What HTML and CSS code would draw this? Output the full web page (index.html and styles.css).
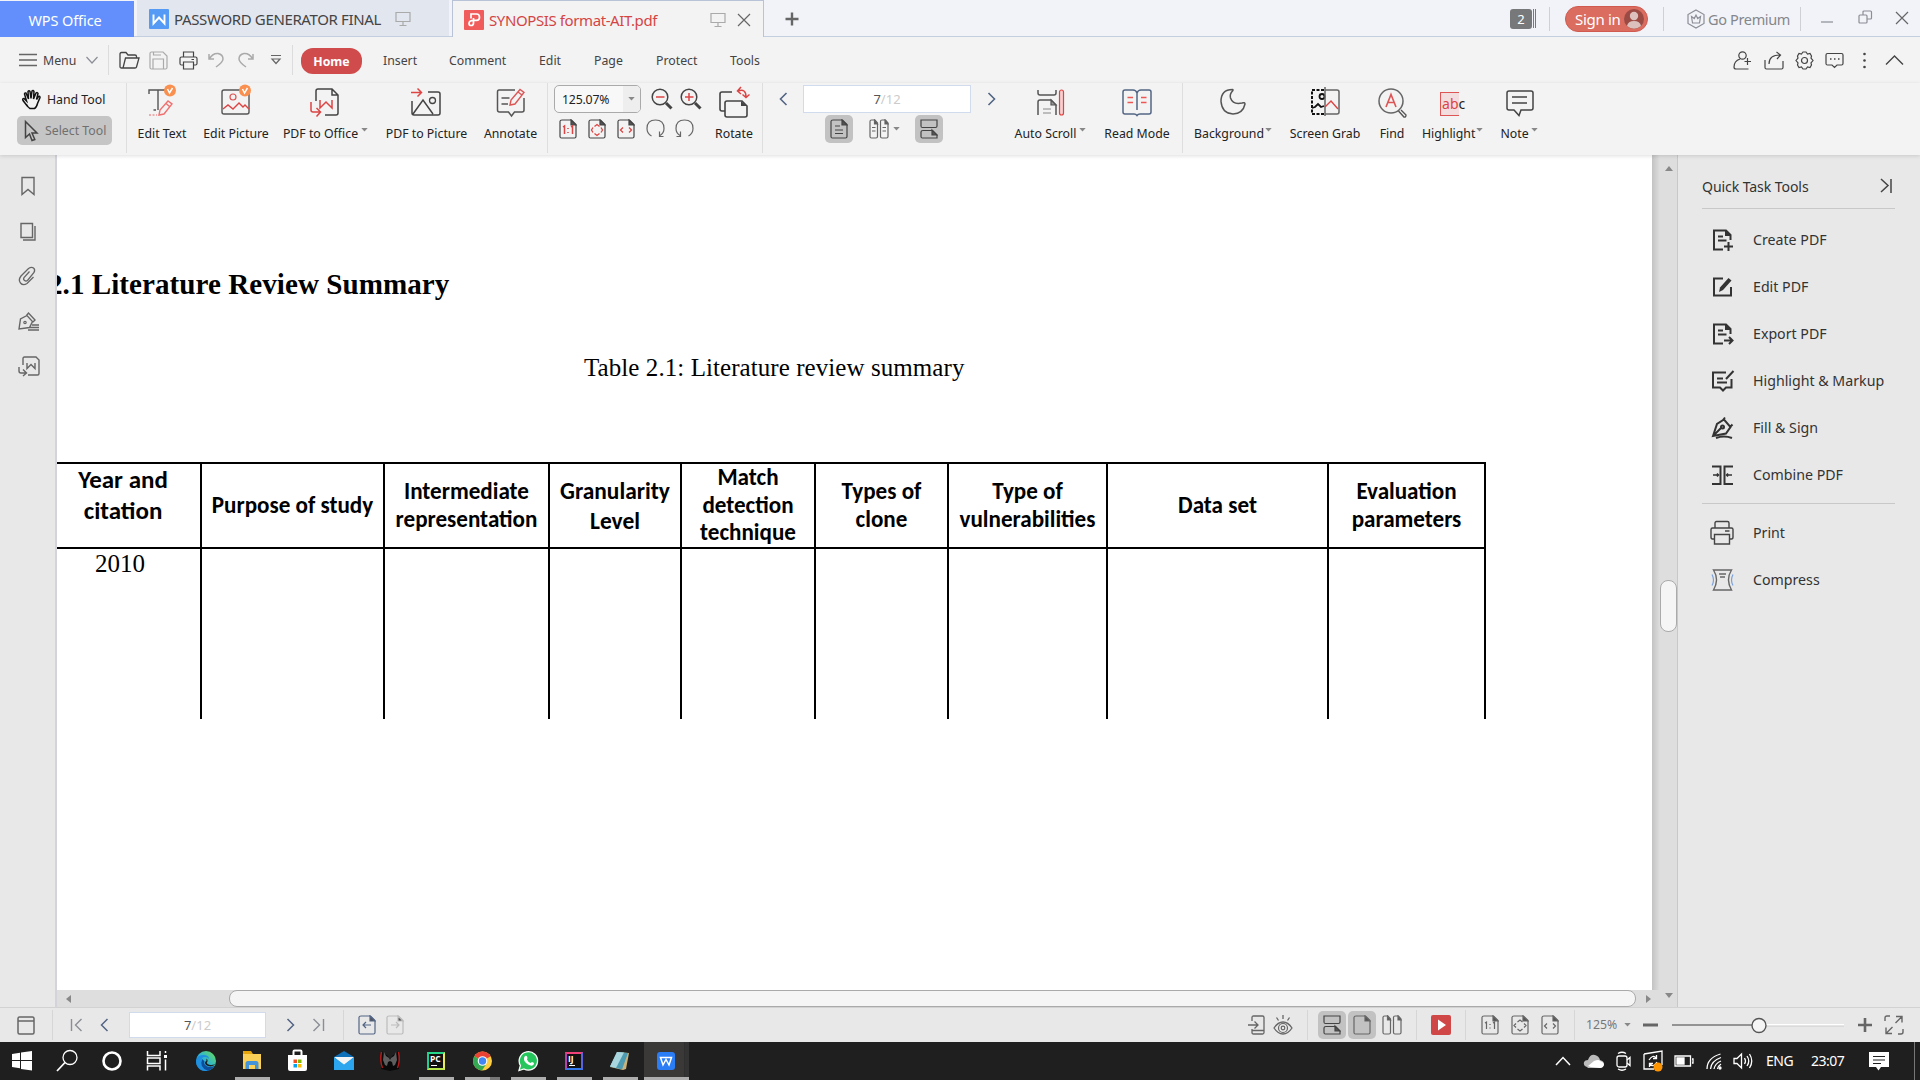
FILE: index.html
```html
<!DOCTYPE html>
<html lang="en">
<head>
<meta charset="utf-8">
<title>SYNOPSIS format-AIT.pdf - WPS Office</title>
<link rel="stylesheet" href="styles.css">
</head>
<body>
<svg class="defs" width="0" height="0">
  <symbol id="monitor" viewBox="0 0 16 16"><path d="M1 1.500h14v9H1zM8 10.500V14M4.500 14.500h7"/></symbol>
  <symbol id="page" viewBox="0 0 18 20"><path d="M3 1h9.500L17 5.500V17.500Q17 19 15.500 19H2.500Q1 19 1 17.500V2.500Q1 1 3 1z"/><path class="fold" d="M12 1v5h5z"/></symbol>
  <symbol id="pages2" viewBox="0 0 20 20"><path d="M1 2.500Q1 1 2.500 1H6l2.500 3v13.500Q8.500 19 7 19H2.500Q1 19 1 17.500zM11.500 2.500Q11.500 1 13 1h3.500L19 4v13.500Q19 19 17.500 19H13q-1.500 0-1.500-1.500z"/><path class="fold" d="M5.500 1v4h3zM16 1v4h3z"/></symbol>
  <symbol id="scrollpages" viewBox="0 0 18 20"><path d="M1 1h16v6Q17 8.500 15.500 8.500h-13Q1 8.500 1 7zM3 11.500h9.500L17 16v3H2.500Q1 19 1 17.500V13q0-1.500 2-1.500z"/><path class="fold" d="M12 11v5h5z"/></symbol>
  <symbol id="caret" viewBox="0 0 8 5"><path class="caret-fill" d="M0 0h8L4 4.500z"/></symbol>
</svg>

<header class="titlebar">
  <div class="tab-home">WPS Office</div>
  <div class="tab tab-doc">
    <svg class="ic" width="20" height="20"><rect width="20" height="20" rx="1" fill="#559bf6"/><path d="M4.500 5.500v9l5.500-6 5.500 6v-9" stroke="#fff" stroke-width="1.900"/></svg>
    <span class="tab-title">PASSWORD GENERATOR FINAL</span>
    <svg class="ic light" width="16" height="16"><use href="#monitor"/></svg>
  </div>
  <div class="tab tab-active">
    <svg class="ic" width="20" height="20"><rect width="20" height="20" rx="1" fill="#f05b5b"/><path d="M7 8.500V4h5.500q3 0 3 3.200t-3 3.200H10q-5 0-5 3 0 2.100 2.200 2.100 2.300 0 2.300-2.500V8" stroke="#fff" stroke-width="1.700"/></svg>
    <span class="tab-title">SYNOPSIS format-AIT.pdf</span>
    <svg class="ic light" width="16" height="16"><use href="#monitor"/></svg>
    <svg class="ic gray" width="14" height="14"><path d="M1 1l12 12M13 1L1 13"/></svg>
  </div>
  <svg class="ic gray" width="16" height="16"><path d="M8 1.500v13M1.500 8h13" stroke-width="2.400"/></svg>
  <div class="count"><b>2</b><i></i><i></i></div>
  <span class="sep-title"></span>
  <div class="signin">Sign in<svg class="ic" width="20" height="20"><circle cx="10" cy="10" r="10" fill="#9b4b44"/><circle cx="10" cy="7" r="4.200" fill="#dcc0bd"/><path d="M3 17q1-5 7-5t7 5q-7 5.500-14 0z" fill="#dcc0bd"/></svg></div>
  <span class="sep-title"></span>
  <div class="premium"><svg class="ic gray2" width="18" height="20"><path d="M9 1l8 4.500v9L9 19l-8-4.500v-9zM4.500 7.500l1 6.500h7l1-6.500-2.800 2L9 6 7.300 9.500z"/></svg>Go Premium</div>
  <span class="sep-title"></span>
  <svg class="ic gray2" width="12" height="20"><path d="M0 13h12"/></svg>
  <svg class="ic gray2 up" width="15" height="15"><path d="M1 6q0-1 1-1h6q1 0 1 1v6q0 1-1 1H2q-1 0-1-1zM5 5V2q0-1 1-1h6.500q1 0 1 1v6q0 1-1 1H9"/></svg>
  <svg class="ic gray up" width="14" height="14"><path d="M1 1l12 12M13 1L1 13"/></svg>
</header>

<nav class="menubar">
  <svg class="ic gray" width="18" height="14"><path d="M0 1.500h18M0 7h18M0 12.500h18" stroke-width="1.400"/></svg>
  <span>Menu</span>
  <svg class="ic gray2" width="12" height="8"><path d="M.500 1L6 7l5.500-6"/></svg>
  <i class="sep-menu"></i>
  <svg class="ic dark" width="21" height="20"><path d="M4 18H2.500Q1 18 1 16.500V4q0-1.500 1.500-1.500H7l2 2.500h7q1.500 0 1.500 1.500V8M4 18L6.500 8H20l-2.500 9q-.300 1-1.500 1z" stroke-width="1.300"/></svg>
  <svg class="ic light" width="19" height="19"><path d="M1 2.500Q1 1 2.500 1H14l4 4v11.500q0 1.500-1.500 1.500h-14Q1 18 1 16.500zM4.500 1v3H12M4 18V8h10.500v10"/></svg>
  <svg class="ic dark" width="19" height="19"><path d="M4.500 6V1h10v5M4 14H2.500Q1 14 1 12.500V7.500Q1 6 2.500 6h14Q18 6 18 7.500v5q0 1.500-1.500 1.500H15M4.500 11h10v7h-10zM12.500 8.500h2.500"/></svg>
  <svg class="ic light" width="16" height="16"><path d="M1 2v5h5M1.500 6.500Q5 1 10 1.500q5 1 5 5.500 0 3-7 8" stroke-width="1.500"/></svg>
  <svg class="ic light" width="16" height="16"><path d="M15 2v5h-5M14.500 6.500Q11 1 6 1.500 1 2.500 1 7q0 3 7 8" stroke-width="1.500"/></svg>
  <svg class="ic gray" width="10" height="12"><path d="M0 1.500h10M1 5h8L5 9.500z"/></svg>
  <i class="sep-menu"></i>
  <b class="home-tab">Home</b>
  <span>Insert</span><span>Comment</span><span>Edit</span><span>Page</span><span>Protect</span><span>Tools</span>
  <svg class="ic dark" width="19" height="19"><circle cx="9.500" cy="4.500" r="3.700"/><path d="M7 8q-6 2-6 8 0 2 2 2h12.500M14.500 7v7M11.500 10.500h6.500"/></svg>
  <svg class="ic dark" width="20" height="19"><path d="M1 9v7.500Q1 18 2.500 18h15q1.500 0 1.500-1.500V10M5 13q0-9 11-9M12.500 1l4 3-3.500 4"/></svg>
  <svg class="ic dark" width="19" height="19"><circle cx="9.500" cy="9.500" r="3"/><path d="M6.500 3L8 1h3l1.500 2 2.500-.500L16.500 5 16 7l2 2.500L16 12l.500 2-1.500 2.500-2.500-.500L11 18H8l-1.500-2L4 16.500 2.500 14 3 12 1 9.500 3 7l-.500-2L4 2.500z"/></svg>
  <svg class="ic dark" width="19" height="17"><path d="M2.500 1.500h14q1.500 0 1.500 1.500v8.500q0 1.500-1.500 1.500H12l-2.500 2.500L7 13H2.500Q1 13 1 11.500V3q0-1.500 1.500-1.500z"/><path d="M5 7h1.500M9 7h1.500M13 7h1.500" stroke-width="1.700"/></svg>
  <svg class="ic" width="4" height="18"><g fill="#444"><circle cx="1.500" cy="3" r="1.300"/><circle cx="1.500" cy="9.500" r="1.300"/><circle cx="1.500" cy="16" r="1.300"/></g></svg>
  <svg class="ic dark" width="19" height="12"><path d="M1 10.500L9.500 2l8.500 8.500" stroke-width="1.400"/></svg>
</nav>

<section class="ribbon">
  <div class="tools">
    <div class="tool"><svg class="ic black" width="22" height="22"><path d="M5.500 16L2 11.500q-1-2 1-2l2.500 2.500L3.500 5Q3.500 3.500 5 4l2.500 6L7 2.500Q8 1 9 2.500l1 7 1-7.500q1.200-1.200 2 .500l-.500 7.500 2.500-6q1.500-1 2 .500l-1.500 6 2-3q1.500-.800 1.500 1l-2.500 6q-1 4-3 5H9q-2-1-3.500-4z" stroke-width="1.500"/></svg>Hand Tool</div>
    <div class="tool selected"><svg class="ic dark" width="16" height="22"><path d="M2.500 1.500v16l4-3.500 2.500 6.500 2.800-1-2.800-6.500h5z" stroke-width="1.500"/></svg>Select Tool</div>
  </div>
  <i class="sep-ribbon"></i>
  <div class="cmd edit-text"><svg class="ic" width="32" height="34"><path d="M4 10V6h18v4M13 6v20M8.500 26H11" stroke="#555" stroke-width="1.400"/><path d="M14 31l1-5 8-9 4 3-8 10zM20.500 19l4 3.500" stroke="#f07070" stroke-width="1.400"/><path d="M4 31h8" stroke="#e66" stroke-dasharray="2 1.500"/><circle cx="25" cy="6.500" r="6" fill="#f9904f"/><path d="M22.500 5l2 4 3-5" stroke="#fff" stroke-width="1.500"/></svg><span>Edit Text</span></div>
  <div class="cmd edit-pic"><svg class="ic" width="32" height="34"><rect x="3" y="6" width="27" height="24" rx="2" stroke="#555" stroke-width="1.400"/><circle cx="14" cy="13" r="3" stroke="#d55"/><path d="M4 25l5-4 5 4 6-6 4 4 2-2 4 4" stroke="#d44" stroke-width="1.400"/><circle cx="26" cy="6.500" r="6" fill="#f9904f"/><path d="M23.500 5l2 4 3-5" stroke="#fff" stroke-width="1.500"/></svg><span>Edit Picture</span></div>
  <div class="cmd drop to-office"><svg class="ic" width="32" height="34"><path d="M8 17V7q0-2 2-2h14l6 6v18q0 2-2 2H17M24 5v6h6" stroke="#444" stroke-width="1.500"/><path d="M12 16v8l6-6 6 6v-8" stroke="#d44" stroke-width="1.500"/><path d="M3 18v8q0 2 2 2h7M8.500 24l4 4-4 4.500" stroke="#d44" stroke-width="1.500"/></svg><span>PDF to Office</span><svg class="ic mark" width="7" height="4"><use href="#caret"/></svg></div>
  <div class="cmd to-pic"><svg class="ic" width="32" height="34"><path d="M18 8h10q2 0 2 2v19q0 2-2 2H4q-2 0-2-2V17M3 30l10-14 10 14" stroke="#444" stroke-width="1.500"/><circle cx="22.500" cy="16.500" r="3" stroke="#444" stroke-width="1.300"/><path d="M1 8.500h10M7.500 4.500l4 4-4 4" stroke="#d44" stroke-width="1.500"/></svg><span>PDF to Picture</span></div>
  <div class="cmd annotate"><svg class="ic" width="32" height="34"><path d="M20 6H4Q2.500 6 2.500 8v18q0 2 2 2h9l3 4 3-4H27q2 0 2-2V14M6.500 14h8M6.500 20H13" stroke="#555" stroke-width="1.500"/><path d="M15 21l1-5L25 5.500l4 3L20 20zM23 8l4 3" stroke="#d55" stroke-width="1.400"/></svg><span>Annotate</span></div>
  <i class="sep-ribbon"></i>
  <div class="zoombox">
    <div class="row-top">
      <div class="combo"><span>125.07%</span><i><svg class="ic" width="7" height="4"><use href="#caret"/></svg></i></div>
      <svg class="ic dark" width="22" height="22"><circle cx="9" cy="9" r="7.800" stroke-width="1.500"/><path d="M15 15l5.500 5.500" stroke-width="3"/><path d="M5 9h8.500" stroke="#d44" stroke-width="1.500"/></svg>
      <svg class="ic dark" width="22" height="22"><circle cx="9" cy="9" r="7.800" stroke-width="1.500"/><path d="M15 15l5.500 5.500" stroke-width="3"/><path d="M5 9h8.500M9 5v8" stroke="#d44" stroke-width="1.500"/></svg>
    </div>
    <div class="row-bottom">
      <svg class="ic dark" width="18" height="20"><use href="#page"/><path d="M4 8l1.500-1v8M12 8l1.500-1v8M9 9v1M9 13v1" stroke="#d44" stroke-width="1.500"/></svg>
      <svg class="ic dark" width="18" height="20"><use href="#page"/><path d="M6.500 7.500l2.500-2 2.500 2M6.500 14.500l2.500 2 2.500-2M5 8.500L3.500 11 5 13.500M13 8.500l1.500 2.500-1.500 2.500" stroke="#d44" stroke-width="1.300"/></svg>
      <svg class="ic dark" width="18" height="20"><use href="#page"/><path d="M6 8.500L3.500 11 6 13.500M12 8.500l2.500 2.500-2.500 2.500" stroke="#d44" stroke-width="1.300"/></svg>
      <svg class="ic gray" width="19" height="20"><path d="M5.500 17Q1 14.500 1 9.500 1 1 9.500 1T18 9.500q0 4.500-4 7M13.500 12.500v5h4"/></svg>
      <svg class="ic gray" width="19" height="20"><path d="M13.500 17q4.500-2.500 4.500-7.500Q18 1 9.500 1T1 9.500q0 4.500 4 7M5.500 12.500v5h-4"/></svg>
    </div>
  </div>
  <div class="cmd rotate"><svg class="ic" width="32" height="34"><path d="M7 27H4q-2 0-2-2V10q0-2 2-2h10M7 30V19q0-2 2-2h15l5 5v9q0 2-2 2H9q-2 0-2-2z" stroke="#444" stroke-width="1.600"/><path d="M14 8v5M23 17v5h6z" fill="#444"/><path d="M20 7q8-3 8 6M23 3l-3.500 4L23 10M24.500 10.500l3.500 3 3.500-3" stroke="#d44" stroke-width="1.500"/></svg><span>Rotate</span></div>
  <i class="sep-ribbon"></i>
  <div class="pagebox">
    <div class="row-top">
      <svg class="ic blue" width="9" height="14"><path d="M7.500 1L1.500 7l6 6" stroke-width="1.600"/></svg>
      <div class="pageno">7<span>/12</span></div>
      <svg class="ic blue" width="9" height="14"><path d="M1.500 1l6 6-6 6" stroke-width="1.600"/></svg>
    </div>
    <div class="row-bottom">
      <div class="toggle"><svg class="ic dark" width="18" height="20"><use href="#page"/><path d="M5 7h5M5 11h8M5 14.500h8"/></svg></div>
      <svg class="ic gray" width="20" height="20"><use href="#pages2"/><path d="M3 8.500h3.500M3 12h3.500M13.500 8.500H17M13.500 12H17"/></svg>
      <svg class="ic" width="7" height="4"><use href="#caret"/></svg>
      <div class="toggle"><svg class="ic dark" width="18" height="20"><use href="#scrollpages"/></svg></div>
    </div>
  </div>
  <div class="cmd drop scroll"><svg class="ic" width="32" height="34"><path d="M3 6v3q0 2 2 2h14q2 0 2-2V6M3 31V18q0-2 2-2h11l5 5v10" stroke="#555" stroke-width="1.500"/><path d="M16 16v5h5z" fill="#999" stroke="#555"/><path d="M8 25h8M8 29h8" stroke="#888"/><rect x="24.500" y="6" width="4" height="25" rx="2" stroke="#d44" fill="#f5d0d0"/></svg><span>Auto Scroll</span><svg class="ic mark" width="7" height="4"><use href="#caret"/></svg></div>
  <div class="cmd read"><svg class="ic" width="32" height="34"><path d="M16 9v17M16 9q-1-3-4-3H4Q2 6 2 8v20q0 2 2 2h9q2 0 3 1.500Q17 30 19 30h9q2 0 2-2V8q0-2-2-2h-8q-3 0-4 3z" stroke="#536585" stroke-width="1.500"/><path d="M6.500 13.500H12M6.500 18.500H12M20 13.500h5.500M20 18.500h5.500" stroke="#e55" stroke-width="1.500"/></svg><span>Read Mode</span></div>
  <i class="sep-ribbon"></i>
  <div class="cmd drop backdrop"><svg class="ic" width="32" height="34"><path d="M15.500 5.500Q4 5.500 4 17.500 5 29.500 16 30q10-.500 12-10 0-2-3-1-9 2-11.500-5Q12.500 10 15.500 7q1-1.500 0-1.500z" stroke="#555" stroke-width="1.500"/></svg><span>Background</span><svg class="ic mark" width="7" height="4"><use href="#caret"/></svg></div>
  <div class="cmd grab"><svg class="ic" width="32" height="34"><path d="M15 6H3v24h12" stroke="#111" stroke-width="2" stroke-dasharray="3 1.500"/><circle cx="13" cy="12.500" r="2.500" stroke="#111" stroke-width="1.800"/><path d="M3 24l3-1 3-3 3 3 3-1" stroke="#111" stroke-width="1.800"/><path d="M16 3v29M16 6h12q2 0 2 2v20q0 2-2 2H16" stroke="#666" stroke-width="1.500"/><path d="M16 23l6-6 7 8" stroke="#d44" stroke-width="1.400"/></svg><span>Screen Grab</span></div>
  <div class="cmd find"><svg class="ic" width="32" height="34"><circle cx="15" cy="17" r="12" stroke="#666" stroke-width="1.500"/><path d="M22.500 27l5.500 6q2 .500 2-2l-5-5" stroke="#555" stroke-width="1.400"/><path d="M10 23l5-12.500L20 23M12 18.500h6" stroke="#d55" stroke-width="1.600"/></svg><span>Find</span></div>
  <div class="cmd drop hilite"><div class="abc"><em>ab</em>c</div><span>Highlight</span><svg class="ic mark" width="7" height="4"><use href="#caret"/></svg></div>
  <div class="cmd drop note"><svg class="ic" width="32" height="34"><path d="M5 7h22q2 0 2 2v15q0 2-2 2H17l-2 5.500L10 26H5q-2 0-2-2V9q0-2 2-2zM8 13h15M8 19h15" stroke="#444" stroke-width="1.500"/></svg><span>Note</span><svg class="ic mark" width="7" height="4"><use href="#caret"/></svg></div>
</section>

<main class="workspace">
  <aside class="rail">
    <svg class="ic gray" width="20" height="20"><path d="M4 1.500h12v17l-6-5-6 5z" stroke-width="1.400"/></svg>
    <svg class="ic gray" width="20" height="20"><path d="M3 2.500h11.500v14H3zM17 5v14H5" stroke-width="1.400"/></svg>
    <svg class="ic gray" width="20" height="20"><path d="M11.500 5.500L6 11.500q-1 2 .500 3t3 0l6.500-8q1.500-3-.500-4.500t-5 .500L3 10q-3 4-.500 7t6.500.500L15.500 11" stroke-width="1.300"/></svg>
    <svg class="ic gray" width="22" height="20"><path d="M1 18L2.500 8 9 4.500l5.500 6-3 6zM8.500 4.500L10.500 2l6.500 7-2 2M14 14h7M12 16.500h9M10 19h11" stroke-width="1.400"/><circle cx="7" cy="11.500" r="1.200"/></svg>
    <svg class="ic gray" width="22" height="20"><path d="M5 9V2.500Q5 1 6.500 1H18l3 3v13.500q0 1.500-1.500 1.500H10M1 11v4q0 2 2 2h5M5 13.500L8.500 17 5 20M9 7v5.500l4-4 4 4V7" stroke-width="1.400"/></svg>
  </aside>
  <div class="viewer">
    <article class="sheet">
      <h1>2.1 Literature Review Summary</h1>
      <p class="caption">Table 2.1: Literature review summary</p>
      <table>
        <colgroup><col class="c1"><col class="c2"><col class="c3"><col class="c4"><col class="c5"><col class="c6"><col class="c7"><col class="c8"><col class="c9"></colgroup>
        <thead><tr><th class="year">Year and<br>citation</th><th>Purpose of study</th><th>Intermediate<br>representation</th><th class="loose">Granularity<br>Level</th><th>Match<br>detection<br>technique</th><th>Types of<br>clone</th><th>Type of<br>vulnerabilities</th><th>Data set</th><th>Evaluation<br>parameters</th></tr></thead>
        <tbody><tr><td>2010</td><td></td><td></td><td></td><td></td><td></td><td></td><td></td><td></td></tr></tbody>
      </table>
    </article>
    <div class="vscroll"><svg class="ic" width="8" height="5"><path d="M0 5h8L4 0z" fill="#888"/></svg><i></i><svg class="ic" width="8" height="5"><path d="M0 0h8L4 5z" fill="#888"/></svg></div>
    <div class="hscroll"><svg class="ic" width="5" height="8"><path d="M5 0v8L0 4z" fill="#888"/></svg><i></i><svg class="ic" width="5" height="8"><path d="M0 0v8l5-4z" fill="#888"/></svg></div>
  </div>
  <aside class="panel">
    <div class="panel-head">Quick Task Tools<svg class="ic dark" width="12" height="15"><path d="M1 0l7 6.500L1 13M11 0v14" stroke-width="1.500"/></svg></div>
    <ul>
      <li><svg class="ic bold" width="24" height="24"><path d="M13 21.500H4v-19h12L20.500 7v5M8 8.500h5M8 12.500h8.500M18.500 14v9M14 18.500h9"/><path d="M15 2v6h6z" fill="#333" stroke="none"/></svg>Create PDF</li>
      <li><svg class="ic bold" width="24" height="24"><path d="M13 3.500H4v17h17V12"/><path d="M9 17l1-4.500L18.500 3l3 2.500L13 15z" fill="#333" stroke="none"/></svg>Edit PDF</li>
      <li><svg class="ic bold" width="24" height="24"><path d="M13 21.500H4v-19h12L20.500 7v5M8 8.500h5M8 12.500h8.500M14 18.500h8M19 15l3.500 3.500L19 22"/><path d="M15 2v6h6z" fill="#333" stroke="none"/></svg>Export PDF</li>
      <li><svg class="ic bold" width="24" height="24"><path d="M16 3.500H3v15h7l3 3 3-3h5.500V10M7 9.500h6M7 13.500h10M23.500 2L16 10"/></svg>Highlight &amp; Markup</li>
      <li><svg class="ic bold" width="24" height="24"><path d="M3 20L7 8l7-4.500L20.500 11 16 17.500zM3 20l9-9M13 4l2-2.500M20 11l2.500-2.500M6 22q8-3 16 0"/><circle cx="12.500" cy="11" r="1.500"/></svg>Fill &amp; Sign</li>
      <li><svg class="ic bold" width="24" height="24"><path d="M2 3.500h8.500v17.500H2M23 3.500h-8.500v17.500H23"/><path d="M3 12h6M16 12h6M7 10.500L8.500 12 7 13.500M18 10.500L16.500 12l1.500 1.500" stroke-width="1.500"/></svg>Combine PDF</li>
    </ul>
    <ul>
      <li><svg class="ic dark" width="26" height="26"><path d="M6 8V3q0-1.500 1.500-1.500h11Q20 1.500 20 3v5M6 19H3.500Q2 19 2 17V9.500Q2 8 3.500 8h19Q24 8 24 9.500V17q0 2-1.500 2H20M5.500 14.500h15V24h-15zM16 11h4.500" stroke-width="1.400"/></svg>Print</li>
      <li><svg class="ic gray" width="26" height="26"><path d="M4.500 3h18q-6 9.500 0 20h-18q6-10.500 0-20zM10 7h7M11 10h5" stroke-width="1.400"/><path d="M3 7.500Q6 13 3 18.500M24 7.500q-3 5.500 0 11" stroke="#79a0de"/></svg>Compress</li>
    </ul>
  </aside>
</main>

<footer class="status">
  <svg class="ic gray" width="18" height="19"><path d="M2.500 1h13Q17 1 17 2.500v14q0 1.500-1.500 1.500h-13Q1 18 1 16.500v-14Q1 1 2.500 1zM1 5h16" stroke-width="1.500"/></svg>
  <i class="sep-status"></i>
  <svg class="ic gray2" width="13" height="14"><path d="M1.500 1v12M11.500 1L5.500 7l6 6" stroke-width="1.400"/></svg>
  <svg class="ic blue" width="9" height="14"><path d="M7.500 1L1.500 7l6 6" stroke-width="1.500"/></svg>
  <div class="pageno">7<span>/12</span></div>
  <svg class="ic blue" width="9" height="14"><path d="M1.500 1l6 6-6 6" stroke-width="1.500"/></svg>
  <svg class="ic gray2" width="13" height="14"><path d="M10.500 1v12M.500 1l6 6-6 6" stroke-width="1.400"/></svg>
  <i class="sep-status"></i>
  <svg class="ic blue" width="18" height="20"><use href="#page"/><path d="M13 10H5M8 7l-3 3 3 3"/></svg>
  <svg class="ic pale" width="18" height="20"><use href="#page"/><path d="M5 10h8M10 7l3 3-3 3"/></svg>
  <svg class="ic gray" width="18" height="20"><path d="M4 6V2.500Q4 1 5.500 1h9Q16 1 16 2.500v15q0 1.500-1.500 1.500h-9Q4 19 4 17.500V14M0 10h9.500M6.500 6.500L10 10l-3.500 3.500M4 15.500h12" stroke-width="1.300"/></svg>
  <svg class="ic gray" width="20" height="20"><path d="M1 13q4-6 9-6t9 6q-4 6-9 6t-9-6zM10 0v4M3.500 2.500l2 3M16.500 2.500l-2 3" stroke-width="1.300"/><circle cx="10" cy="13" r="4.500"/><circle cx="10" cy="13" r="1.800"/></svg>
  <i class="sep-status"></i>
  <div class="toggle"><svg class="ic dark" width="18" height="20"><use href="#scrollpages"/></svg></div>
  <div class="toggle"><svg class="ic gray" width="18" height="20"><use href="#page"/></svg></div>
  <svg class="ic gray" width="20" height="20"><use href="#pages2"/></svg>
  <i class="sep-status"></i>
  <svg class="ic" width="20" height="20"><rect width="20" height="20" rx="2" fill="#cf4747"/><path d="M7 4.500v11l8-5.500z" fill="#fff"/></svg>
  <i class="sep-status"></i>
  <svg class="ic gray" width="18" height="20"><use href="#page"/><path d="M4 8l1.500-1v7M12 8l1.500-1v7M9 9v1M9 12.500v1"/></svg>
  <svg class="ic gray" width="18" height="20"><use href="#page"/><path d="M6.500 7L9 5l2.500 2M6.500 14L9 16l2.500-2M5 8.500l-2 2 2 2M13 8.500l2 2-2 2"/></svg>
  <svg class="ic gray" width="18" height="20"><use href="#page"/><path d="M6 8.500l-2.500 2.500L6 13.500M12 8.500l2.500 2.500-2.500 2.500"/></svg>
  <i class="sep-status"></i>
  <span class="pct">125%</span>
  <svg class="ic" width="7" height="4"><use href="#caret"/></svg>
  <svg class="ic gray" width="15" height="4"><path d="M0 2h15" stroke-width="3"/></svg>
  <svg class="ic slider" width="173" height="18"><path d="M0 9h80" stroke="#777" stroke-width="1.500"/><path d="M94 9h78" stroke="#fff" stroke-width="2"/><path d="M94 10h78" stroke="#ccc"/><circle cx="87" cy="9.500" r="7" fill="#f5f5f5" stroke="#555" stroke-width="1.400"/></svg>
  <svg class="ic gray" width="16" height="16"><path d="M8 1v14M1 8h14" stroke-width="2.600"/></svg>
  <svg class="ic gray" width="20" height="20"><path d="M0 6V3q0-2 2-2h3M11 1.500h6v6M17 1.500L10.500 8M18 14v3q0 2-2 2h-3M7 18.500H1v-6M1 18.500L7.500 12" stroke-width="1.400"/></svg>
</footer>

<div class="taskbar">
  <div class="apps">
    <svg class="ic" width="45" height="38"><path d="M12 12l8-1.200V18h-8zM21 10.600l11-1.600v9H21zM12 19h8v7.300L12 25zM21 19h11v9.500l-11-1.600z" fill="#fff"/></svg>
    <svg class="ic white" width="45" height="38"><circle cx="25" cy="15.500" r="7"/><path d="M20 20.500L12 29" stroke-width="1.800"/></svg>
    <svg class="ic white" width="45" height="38"><circle cx="21" cy="19" r="8.500" stroke-width="2.600"/></svg>
    <svg class="ic white" width="48" height="38"><path d="M9.500 9v4.500H22V9M9.500 28.500V24H22v4.500M9.500 16h12.500v5.500H9.500zM27.500 17.500v11M27.500 9v2" stroke-width="1.500"/><path d="M26 13h3v3h-3z" fill="#fff" stroke="none"/></svg>
    <svg class="ic" width="46" height="38"><defs><linearGradient id="edge" x1="0" y1="1" x2="1" y2="0"><stop offset="0" stop-color="#0a6cc0"/><stop offset=".45" stop-color="#2ab0dc"/><stop offset="1" stop-color="#6be04e"/></linearGradient></defs><circle cx="20" cy="19" r="10" fill="url(#edge)"/><path d="M10 19q1-6 7-6 6 0 6 4-1-2-4-2-4 0-4 5 0 6 7 8.500-4 1.500-8-1-4-3-4-8.500z" fill="#1f8fe0"/><path d="M16 17q-3 9 6 11.700 4-1 6.500-5-5 2.500-8.500 0-2.500-2-1.500-4.500z" fill="#0d4f9c"/><path d="M19 20q2-1 1.500-3.500 1.500 1 1 3-1.500 1 0 2.500 3 2 8 0-3 3.500-7.500 2-3.500-1.500-3-4z" fill="#1f1f1f"/></svg>
    <div class="open"><svg class="ic" width="35" height="38"><path d="M8 9h8l2 3h-10z" fill="#e5a50d"/><path d="M8 12h18v15H8z" fill="#fbd057"/><path d="M13 19h8q2.500 0 2.500 2.500V27h-3.500v-4h-6v4h-3.500v-5.500Q10.500 19 13 19z" fill="#4394d8"/></svg></div>
    <svg class="ic" width="46" height="38"><path d="M12.500 14V9.500q0-1 1-1h6q1 0 1 1V14" stroke="#fff" stroke-width="2"/><path d="M7 13h19v14q0 2-2 2H9q-2 0-2-2z" fill="#fff"/><path d="M12.500 17.500h3.500V21h-3.500z" fill="#f25022"/><path d="M17 17.500h3.500V21H17z" fill="#7fba00"/><path d="M12.500 22h3.500v3.500h-3.500z" fill="#00a4ef"/><path d="M17 22h3.500v3.500H17z" fill="#ffb900"/></svg>
    <svg class="ic" width="46" height="38"><path d="M6 15l10-6 10 6v3H6z" fill="#0f6fb8"/><path d="M6 15h20l-10 9z" fill="#f4f4f4"/><path d="M6 15l10 7.500L26 15v13H6z" fill="#2ba5ee"/></svg>
    <svg class="ic" width="46" height="38"><path d="M8 9l2 3 3 1 3 4 3-4 3-1 2-3 1 18-9 2-9-2z" fill="#090909"/><path d="M10 10l2 4 3 2 1 2 1-2 3-2 2-4 1 8-2 5-2 1-1-4-2-1-2 1-1 4-2-1-2-5z" fill="#5e5e5e"/><path d="M7.500 10q-2 8 1 16M24.500 10q2 8-1 16" stroke="#b71919" stroke-width="1.400"/></svg>
    <div class="open"><div class="ide pc">PC</div></div>
    <div class="open chrome"><svg class="ic" width="35" height="38"><circle cx="17.500" cy="19" r="9.500" fill="#ffcd40"/><path d="M17.500 19L9.300 14.200A9.500 9.500 0 0 1 25.700 14.200z" fill="#ea4335"/><path d="M17.500 19L9.300 14.200A9.500 9.500 0 0 0 17 28.500l4-6z" fill="#34a853"/><circle cx="17.500" cy="19" r="4.800" fill="#fff"/><circle cx="17.500" cy="19" r="3.700" fill="#4285f4"/></svg></div>
    <div class="open"><svg class="ic" width="35" height="38"><path d="M8 28.500l1.400-5A9.200 9.200 0 1 1 13 27z" fill="#25c65b" stroke="#fff" stroke-width="1.300"/><path d="M14 14q2-1 2.500 2l-.500 1.500q1 2.500 3.500 3.500l1.500-1q2.500.500 2 2-1.500 3-6 .500-4.500-3-4-6 0-1.500 1-2.500z" fill="#fff"/></svg></div>
    <div class="open"><div class="ide ij">IJ</div></div>
    <div class="open"><svg class="ic" width="35" height="38"><path d="M14 10l12 1-3 16-3 1-13-3z" fill="#c9b27c"/><path d="M14 10l11 1-6 16.500L7 24.500z" fill="#4d9bb0"/><path d="M14 10l7 .600L13 26l-6-1.500z" fill="#a9d6df"/></svg></div>
    <div class="open current"><svg class="ic" width="40" height="38"><rect x="13" y="10" width="18" height="18" rx="3" fill="#2b7df6"/><path d="M16.500 15.500h11l-2.500 7.500-3-5.500-3 5.500z" stroke="#fff" stroke-width="1.500"/></svg></div>
  </div>
  <div class="tray">
    <svg class="ic white" width="17" height="10"><path d="M1 9l7-7.500L15 9" stroke-width="1.500"/></svg>
    <svg class="ic" width="21" height="16"><path d="M4 14q-4-1-3-5 1-2 4-2 2-6 7-5 4 1 5 5 4 1 4 4-1 4-4 4H5z" fill="#bbb"/><path d="M8 14l-3-1 6-5q5-2 6 0 4 1 4 4-1 3-4 3z" fill="#fff"/></svg>
    <svg class="ic white" width="16" height="20"><rect x="1" y="5" width="10" height="11" rx="2"/><path d="M11 9l3-2.500v8L11 12M2 2.500q4-2.500 8 0M2 18q4 2.500 8 0"/></svg>
    <svg class="ic white" width="20" height="22"><path d="M1 4l18-3v14M1 4v15h10M6 10q4-6 7-2M13.500 5v3.500H10M14 12q-4 6-7 2M6.500 17v-3.500H10"/><circle cx="15" cy="17" r="4.500" fill="#ff9500" stroke="none"/></svg>
    <svg class="ic white" width="20" height="12"><path d="M1 1h15.500v10H1zM18 4h1v4h-1"/><path d="M3 3h7v6H3z" fill="#fff"/></svg>
    <svg class="ic white" width="17" height="17"><path d="M1 16Q1 5 14.500 1M4.500 16Q5 8 15 4.500M8 16q1-5.500 7-8M11.500 16q.500-3 3.500-5"/><circle cx="14" cy="15" r="1" fill="#fff"/></svg>
    <svg class="ic white" width="21" height="16"><path d="M1 5.500h3L8.500 1v14L4 10.500H1zM11.500 5q2 3 0 6M14 3q3.500 5 0 10M16.500 1q4.500 7 0 14"/></svg>
    <span>ENG</span><span>23:07</span>
    <svg class="ic" width="20" height="20"><path d="M0 1h20v15h-8l-2.500 3.500L7 16H0z" fill="#fff"/><path d="M4 5.500h12M4 9h12M4 12.500h8" stroke="#222" stroke-width="1.200"/></svg>
    <i class="desk"></i>
  </div>
</div>
</body>
</html>
```

FILE: styles.css
```css
* { box-sizing: border-box; }
body { margin: 0; width: 1920px; height: 1080px; overflow: hidden; background: #f3f3f3; color: #333; font: 12.3px/18px "Noto Sans", sans-serif; white-space: nowrap; display: grid; grid-template-rows: 37px 46px 72px 852px 35px 38px; }
.defs { position: absolute; }
h1, p, ul { margin: 0; padding: 0; list-style: none; }

.ic { display: block; flex: none; fill: none; stroke-width: 1.2; overflow: visible; }
.black { stroke: #111; }
.dark { stroke: #444; }
.gray { stroke: #666; }
.gray2 { stroke: #8b8e96; }
.light { stroke: #aaa; }
.pale { stroke: #bbb; }
.blue { stroke: #536585; }
.white { stroke: #fff; stroke-width: 1.3; }
.bold { stroke: #333; stroke-width: 2; }
.fold { fill: #555; }
.caret-fill { fill: #888; stroke: none; }

/* Title bar */
.titlebar { display: grid; grid-template-columns: 137px 315px 332px 726px 39px 16px 98px 24px 113px 21px 37px 37px 25px; align-items: center; background: #f2f3f8; border-bottom: 1px solid #c3cede; font-size: 15px; }
.tab-home { width: 134px; height: 36px; line-height: 39px; text-align: center; padding-right: 4px; background: #628ffb; color: #fff; font-size: 14.5px; letter-spacing: -.1px; }
.tab { height: 37px; display: flex; align-items: center; padding-top: 2px; letter-spacing: -.4px; }
.tab-title { margin-left: 5px; }
.tab-doc { width: 312px; height: 36px; align-self: start; padding-left: 12px; background: #e2e6ef; color: #444; letter-spacing: -.36px; }
.tab-doc .tab-title { width: 221px; }
.tab-active { width: 312px; align-self: start; padding-left: 11px; background: #f3f3f3; border: 1px solid #b9c3d8; border-bottom: 0; color: #d34545; }
.tab-active .tab-title { width: 221px; }
.tab-active .light { margin-right: 11px; }
.count { display: flex; gap: 1px; align-items: center; }
.count b { width: 22px; height: 20px; border-radius: 3px; background: #77787a; color: #fff; font-weight: 400; line-height: 20px; text-align: center; font-size: 13px; }
.count i { width: 1px; height: 19px; background: #77787a; }
.sep-title { width: 1px; height: 24px; background: #d0d0d4; }
.signin { width: 83px; height: 26px; display: flex; align-items: center; justify-content: space-between; padding: 0 3px 0 9px; border: 1px solid #d15a50; border-radius: 13px; background: #da6d60; color: #fff; letter-spacing: -.3px; margin-top: 1px; }
.premium { display: flex; align-items: center; gap: 3px; padding-top: 1px; color: #85878c; font-size: 14.5px; letter-spacing: -.35px; }
.up { margin-bottom: 2px; }

/* Menu row */
.menubar { display: grid; grid-template-columns: 24px 43px 22px 10px 30px 30px 29px 30px 33px 21px 9px 82px 66px 90px 55px 62px 74px 1003px 31px 31px 30px 38px 22px 35px; align-items: center; padding-left: 19px; color: #444; }
.menubar > span { padding-top: 2px; }
.sep-menu { width: 1px; height: 30px; background: #dcdcdc; }
.home-tab { width: 61px; height: 26px; border-radius: 12px; background: #d04c4c; color: #fff; text-align: center; line-height: 28px; margin-top: 1px; }
.menubar > :nth-child(n+5) { margin-left: 1px; }

/* Ribbon */
.ribbon { display: flex; align-items: flex-start; position: relative; z-index: 2; box-shadow: 0 1px 4px #0002; padding-left: 17px; color: #222; }
.tools { width: 109px; }
.tool { display: flex; align-items: center; width: 95px; height: 29px; gap: 4px; padding: 1px 0 0 4px; border-radius: 5px; margin-top: 2px; }
.tool.selected { background: #c5c5c5; color: #707070; gap: 6px; padding-left: 6px; }
.sep-ribbon { flex: none; width: 1px; height: 70px; background: #dedede; }
.cmd { flex: none; display: grid; grid-template-rows: 41px 24px; justify-items: center; position: relative; width: 70px; }
.cmd > .ic:first-child { margin-top: 1px; }
.cmd .mark { position: absolute; right: 1px; top: 45px; }
.cmd > span { line-height: 20px; }
.drop > span { padding-right: 10px; }
.edit-text > .ic:first-child { margin-left: -2px; }
.edit-pic { width: 78px; }
.edit-pic > .ic:first-child { margin-left: -3px; }
.to-office { width: 87px; margin-left: 7px; }
.to-office > .ic:first-child { margin-left: -4px; }
.to-pic { width: 97px; margin-left: 9px; }
.to-pic > .ic:first-child { margin-left: -2px; }
.annotate { width: 71px; margin: 0 1px 0 0; }
.rotate { width: 56px; }
.zoombox { width: 158px; padding: 2px 0 0 6px; }
.zoombox .row-top { display: grid; grid-template-columns: 97px 29px 25px; align-items: center; }
.combo { width: 87px; height: 28px; border: 1px solid #aaa; border-radius: 5px; display: flex; justify-content: space-between; padding-left: 7px; line-height: 28px; background: #f8f8f8; overflow: hidden; letter-spacing: -.2px; }
.combo i { width: 17px; background: #eee; display: grid; place-items: center; }
.zoombox .row-bottom { display: grid; grid-template-columns: repeat(5, 29px); padding: 6px 0 0 5px; }
.pagebox { width: 251px; padding: 2px 0 0 16px; }
.pagebox .row-top { display: grid; grid-template-columns: 24px 184px 10px; align-items: center; }
.pageno { width: 168px; height: 28px; background: #fff; border: 1px solid #d0dbee; line-height: 27px; text-align: center; font-size: 13px; color: #555; }
.pageno span { color: #ccc; }
.pagebox .row-bottom { display: grid; grid-template-columns: 44px 24px 22px 28px; align-items: center; padding: 2px 0 0 46px; }
.toggle { width: 28px; height: 28px; border-radius: 5px; background: #c2c2c2; display: grid; place-items: center; }
.scroll { width: 73px; }
.read { width: 78px; margin: 0 6px 0 11px; }
.backdrop { width: 79px; margin-left: 11px; }
.backdrop > .ic:first-child { margin-left: -2px; }
.grab { width: 82px; margin-left: 11px; }
.find { width: 36px; margin-left: 8px; }
.hilite { width: 62px; margin-left: 12px; }
.note { width: 39px; margin-left: 16px; }
.abc { margin: 9px 0 0 -2px; display: flex; align-items: center; font-size: 14px; height: 24px; }
.abc em { font-style: normal; color: #d44; background: #f2dede; border: 1px solid #d55; border-right: 0; height: 24px; line-height: 21px; padding-left: 1px; }

/* Document area */
.workspace { display: grid; grid-template-columns: 57px 1621px 242px; }
.rail { background: #e8e8e8; border-right: 2px solid #d3d3dc; display: flex; flex-direction: column; gap: 25px; padding: 21px 0 0 18px; }
.viewer { display: grid; grid-template: 835px 17px / 1603px 18px; background: linear-gradient(90deg, #dedede 1595px, #c3c3c3 1595px, #dedede 1603px); }
.sheet { width: 1595px; background: #fff; overflow: hidden; color: #000; font-family: "Liberation Serif", serif; }
h1 { margin: 112px 0 0 -9px; font-size: 29.1px; line-height: 34px; letter-spacing: .04px; }
.caption { margin: 52px 0 0 527px; font-size: 25px; line-height: 30px; letter-spacing: .07px; }
table { margin: 79px 0 0 -11px; width: 1440px; table-layout: fixed; border-spacing: 0; text-align: center; }
.c1 { width: 156px; } .c2 { width: 183px; } .c3 { width: 165px; } .c4 { width: 132px; } .c5 { width: 134px; }
.c6 { width: 133px; } .c7 { width: 159px; } .c8 { width: 221px; } .c9 { width: 157px; }
th { height: 87px; padding: 0; border: solid #000; border-width: 2px 2px 2px 0; font: 700 23.1px/27.6px Carlito, Lato, sans-serif; }
th.year { line-height: 31px; vertical-align: top; font-size: 25px; }
th.loose { line-height: 30px; font-size: 23.4px; }
td { height: 170px; padding: 0; border-right: 2px solid #000; vertical-align: top; font-size: 25px; line-height: 29px; }
td:first-child { padding-right: 6px; }
.hscroll i, .vscroll i { border: 1px solid #aaa; }
.vscroll { border-right: 1px solid #c8c8c8; background: #dedede; display: flex; flex-direction: column; align-items: center; padding-top: 11px; height: 852px; }
.vscroll i { width: 17px; height: 52px; margin: 409px 0 361px; border-radius: 8px; background: #f5f5f5; }
.hscroll { background: #dedede; display: flex; align-items: center; padding-left: 9px; }
.hscroll i { width: 1407px; height: 17px; margin: 0 10px 0 158px; border-radius: 8px; background: #f5f5f5; }

/* Task panel */
.panel { background: #e8e8e8; padding: 0 25px 0 24px; font-size: 14.2px; }
.panel-head { display: flex; justify-content: space-between; align-items: center; height: 54px; padding: 10px 3px 0 0; border-bottom: 1px solid #c8c8c8; margin-bottom: 7px; font-size: 14.1px; letter-spacing: -.1px; }
.panel li { height: 47px; display: flex; align-items: center; padding-left: 8px; gap: 19px; }
.panel ul + ul { margin-top: 5px; border-top: 1px solid #c8c8c8; padding-top: 5px; }
.panel ul + ul li { padding-left: 7px; gap: 18px; }

/* Status bar */
.status { display: grid; grid-template-columns: 35px 18px 30px 29px 157px 27px 30px 15px 28px 862px 25px 34px 11px 30px 34px 34px 15px 34px 16px 30px 30px 33px 12px 38px 19px 29px 185px 28px 35px; align-items: center; padding-left: 17px; background: #e8e8e8; border-top: 1px solid #d2d2d2; }
.status .pageno { width: 137px; height: 26px; line-height: 25px; }
.sep-status { width: 1px; height: 30px; background: #d6d6d6; }
.pct { color: #777; }

/* Taskbar */
.taskbar { background: #1f1f1f; display: flex; justify-content: space-between; color: #fff; }
.apps { display: grid; grid-template-columns: 45px 46px 47px 48px 49px 46px 47px 46px 45px 46px 46px 46px 46px 41px 45px; }
.open { width: 35px; height: 38px; border-bottom: 3px solid #aeaeae; }
.chrome { border-image: linear-gradient(90deg, #aeaeae 70%, #777 70%) 1; }
.current { width: 45px; background: linear-gradient(90deg, #3b3937 40px, #2a2a2a 40px, #333 41px); }
.ide { width: 18px; height: 18px; margin: 10px 8px; background: #111; border: 2px solid; border-color: #25d68b #e7ed56 #b8e94c #20cf8f; font: 700 8.5px/10px "Open Sans", sans-serif; padding-left: 1px; }
.ide::after { content: ""; display: block; width: 6px; height: 1px; margin: 1px; background: #fff; }
.ij { border-color: #f04178 #5a62dc #3579ea #b73fae; }
.tray { display: grid; grid-template-columns: 28px 33px 27px 31px 32px 27px 33px 45px 58px 45px 6px; align-items: center; font-size: 14px; letter-spacing: -.5px; }
.desk { width: 1px; height: 38px; background: #777; }
```
